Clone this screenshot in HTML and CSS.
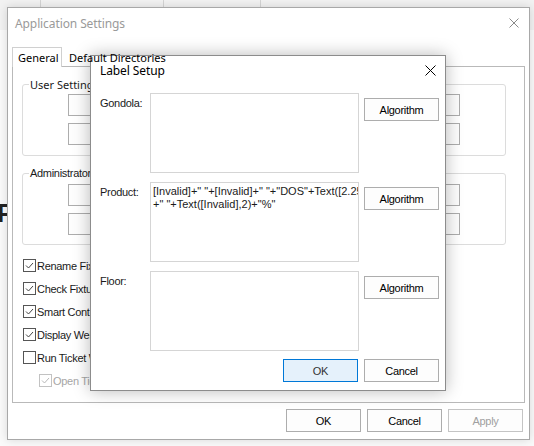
FILE: index.html
```html
<!DOCTYPE html>
<html>
<head>
<meta charset="utf-8">
<title>Label Setup</title>
<link rel="stylesheet" href="styles.css">
</head>
<body>
<div class="desktop">
  <div class="host">
    <div class="host-bar">
      <div class="host-cell c1"></div>
      <div class="host-cell c2">Shelf Layout</div>
      <div class="host-cell c3">Build Series</div>
      <div class="host-cell c4">Tools</div>
    </div>
    <div class="host-letter">P</div>
  </div>

  <div class="win app">
    <div class="titlebar">
      <span class="title inactive">Application Settings</span>
      <svg class="close close-app" width="10" height="10" viewBox="0 0 10 10"><path d="M0.5 0.5L9.5 9.5M9.5 0.5L0.5 9.5"/></svg>
    </div>
    <div class="app-body">
      <div class="tabs">
        <div class="tab active">General</div>
        <div class="tab">Default Directories</div>
      </div>
      <div class="panel">
        <div class="group user">
          <span class="legend seg">User Settings</span>
          <div class="btn-grid">
            <button class="btn"></button><button class="btn"></button>
            <button class="btn"></button><button class="btn"></button>
          </div>
        </div>
        <div class="group admin">
          <span class="legend">Administrator</span>
          <div class="btn-grid">
            <button class="btn"></button><button class="btn"></button>
            <button class="btn"></button><button class="btn"></button>
          </div>
        </div>
        <ul class="checks">
          <li><span class="cb on"><svg viewBox="0 0 11 11"><path d="M2 5.5L4.5 8L9 3"/></svg></span>Rename Fixtures</li>
          <li><span class="cb on"><svg viewBox="0 0 11 11"><path d="M2 5.5L4.5 8L9 3"/></svg></span>Check Fixtures</li>
          <li><span class="cb on"><svg viewBox="0 0 11 11"><path d="M2 5.5L4.5 8L9 3"/></svg></span>Smart Content</li>
          <li><span class="cb on"><svg viewBox="0 0 11 11"><path d="M2 5.5L4.5 8L9 3"/></svg></span>Display Welcome</li>
          <li><span class="cb"></span>Run Ticket Wizard</li>
          <li class="disabled sub"><span class="cb on"><svg viewBox="0 0 11 11"><path d="M2 5.5L4.5 8L9 3"/></svg></span>Open Tickets</li>
        </ul>
      </div>
      <div class="footer">
        <button class="btn wide">OK</button>
        <button class="btn wide">Cancel</button>
        <button class="btn wide dis">Apply</button>
      </div>
    </div>
  </div>

  <div class="win dialog">
    <div class="titlebar dlg-title">
      <span class="title">Label Setup</span>
      <svg class="close close-dlg" width="11" height="11" viewBox="0 0 11 11"><path d="M0.5 0.5L10.5 10.5M10.5 0.5L0.5 10.5"/></svg>
    </div>
    <div class="dlg-body">
      <div class="row">
        <label class="lbl">Gondola:</label>
        <div class="field"></div>
        <button class="btn algo">Algorithm</button>
      </div>
      <div class="row">
        <label class="lbl">Product:</label>
        <div class="field">[Invalid]+" "+[Invalid]+" "+"DOS"+Text([2.25],2)
+" "+Text([Invalid],2)+"%"</div>
        <button class="btn algo">Algorithm</button>
      </div>
      <div class="row">
        <label class="lbl">Floor:</label>
        <div class="field"></div>
        <button class="btn algo">Algorithm</button>
      </div>
      <div class="dlg-footer">
        <button class="btn wide default">OK</button>
        <button class="btn wide">Cancel</button>
      </div>
    </div>
  </div>
</div>
</body>
</html>
```

FILE: styles.css
```css
* { box-sizing: border-box; margin: 0; padding: 0; }
html, body { width: 534px; height: 446px; overflow: hidden; background: #fff; }
body { font-family: "Liberation Sans", Arial, sans-serif; font-size: 11px; letter-spacing: -0.3px; color: #000; }

.desktop { position: relative; width: 534px; height: 446px; background: #fafafa; }

/* background host application */
.host { position: absolute; inset: 0; }
.host-bar { display: flex; height: 30px; background: #f2f2f2; }
.host-cell { border-right: 1px solid #d4d4d4; font: 12px "Noto Sans", sans-serif; letter-spacing: 0; color: #333; text-align: center; padding-top: 5px; line-height: 16px; }
.c1 { width: 41px; }
.c2 { width: 123px; }
.c3 { width: 97px; }
.c4 { flex: 1; border-right: none; }
.host-letter { position: absolute; left: -3px; top: 198px; font: bold 26px "Liberation Sans", sans-serif; color: #222; }

/* windows */
.win { position: absolute; background: #fff; }
.app { left: 7px; top: 7px; width: 523px; height: 433px; border: 1px solid #a8a8a8; box-shadow: 0 0 9px rgba(0,0,0,0.14); }
.dialog { left: 90px; top: 55px; width: 356px; height: 336px; border: 1px solid #8c8c8c; box-shadow: 0 0 16px rgba(0,0,0,0.28); }

.titlebar { height: 30px; display: flex; align-items: center; justify-content: space-between; padding-left: 7px; padding-right: 10px; }
.title { font: 12px "Noto Sans", sans-serif; color: #000; letter-spacing: -0.1px; }
.title.inactive { color: #9a9a9a; }
.close path { stroke: #000; stroke-width: 1; fill: none; }
.close-app path { stroke: #8a8a8a; }
.dlg-title { padding-left: 9px; padding-right: 9px; padding-bottom: 2px; }

/* app body */
.app-body { padding: 0 4px; }
.tabs { display: flex; align-items: flex-end; height: 20px; margin-top: 9px; margin-bottom: -1px; position: relative; z-index: 1; }
.tab { font: 11px "Noto Sans", sans-serif; letter-spacing: 0; line-height: 17px; padding: 0 5px; height: 18px; color: #000; }
.tab.active { height: 20px; line-height: 19px; background: #fff; border: 1px solid #d0d0d0; border-bottom: none; width: 50px; }
.tab:not(.active) { padding-left: 7px; }

.panel { height: 337px; border: 1px solid #b9b9b9; padding: 17px 0 0 9px; }

.group { position: relative; width: 484px; height: 72px; border: 1px solid #dcdcdc; border-radius: 3px; padding: 9px 45px 0; }
.group.admin { margin-top: 17px; padding-top: 10px; }
.legend { position: absolute; left: 6px; top: -8px; background: #fff; padding: 0 1px; line-height: 15px; color: #1a1a1a; }
.legend.seg { font: 11px "Noto Sans", sans-serif; letter-spacing: 0; line-height: 15px; }
.btn-grid { display: grid; grid-template-columns: 1fr 1fr; gap: 7px 10px; }

.btn { display: block; height: 22px; background: #fdfdfd; border: 1px solid #adadad; font: 11px "Liberation Sans", Arial, sans-serif; letter-spacing: -0.3px; color: #000; }
.btn.wide { width: 75px; height: 23px; }
.btn.dis { color: #a0a0a0; border-color: #c4c4c4; }
.btn.default { background: #e5f1fb; border-color: #0078d7; color: #333; }

.checks { list-style: none; margin: 9px 0 0 1px; }
.checks li { display: flex; align-items: center; height: 23px; color: #1a1a1a; }
.checks li.sub { padding-left: 16px; }
.checks li.disabled { color: #a6a6a6; }
.cb { width: 13px; height: 13px; border: 1px solid #555; background: #fff; margin-right: 1px; display: flex; }
.cb svg { width: 11px; height: 11px; }
.cb path { fill: none; stroke: #444; stroke-width: 1; }
.disabled .cb { border-color: #c2c2c2; }
.disabled .cb path { stroke: #b8b8b8; }

.footer { display: flex; justify-content: flex-end; gap: 6px; margin-top: 6px; padding-right: 2px; }

/* dialog body */
.dlg-body { padding: 7px 6px 0 9px; }
.row { display: flex; align-items: flex-start; margin-bottom: 9px; }
.lbl { width: 50px; padding-top: 4px; line-height: 13px; color: #1a1a1a; }
.field { width: 209px; height: 80px; border: 1px solid #d5d5d5; padding: 2px 2px; white-space: pre; overflow: hidden; line-height: 13px; letter-spacing: 0; color: #1a1a1a; }
.btn.algo { width: 75px; height: 23px; margin-left: 5px; margin-top: 5px; }
.dlg-footer { display: flex; justify-content: flex-end; gap: 6px; margin-top: -1px; }
```
